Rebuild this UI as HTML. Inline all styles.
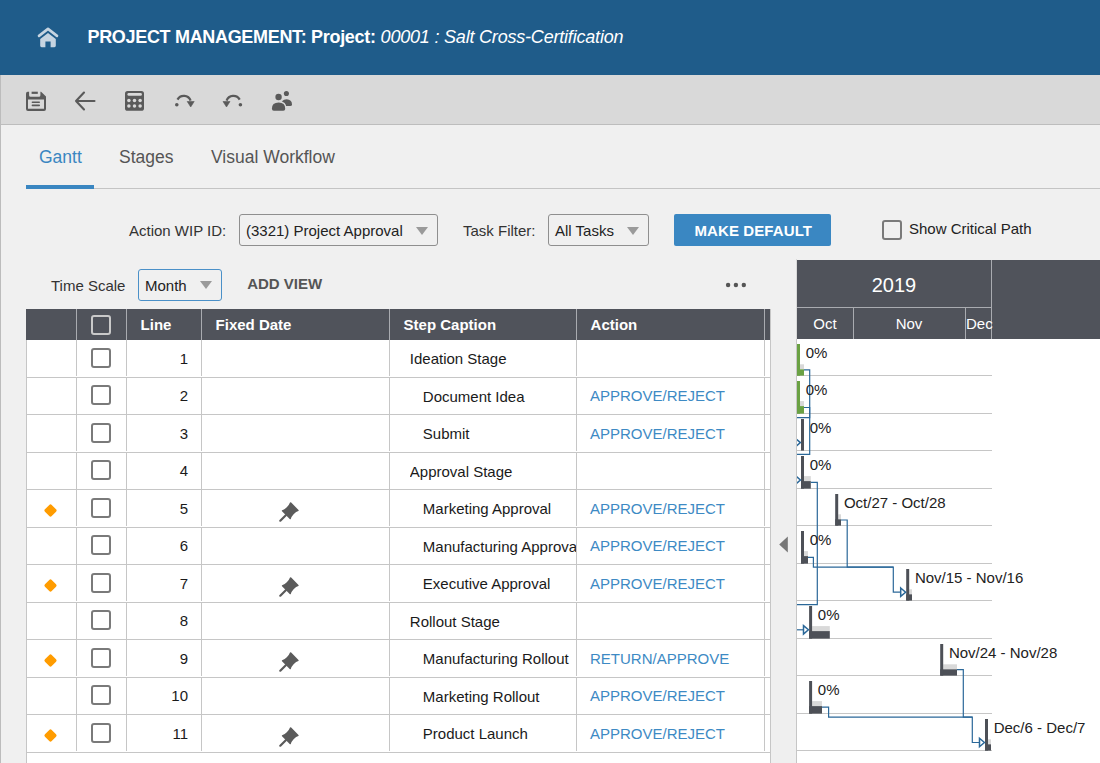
<!DOCTYPE html>
<html><head><meta charset="utf-8">
<style>
*{margin:0;padding:0;box-sizing:border-box}
html,body{width:1100px;height:763px;overflow:hidden}
body{font-family:"Liberation Sans",sans-serif;background:#f0f0f0;position:relative;color:#222}
.a{position:absolute;white-space:nowrap}
#hdr{left:0;top:0;width:1100px;height:75px;background:#1f5c8a}
#tb{left:0;top:75px;width:1100px;height:50px;background:#d9d9d9;border-bottom:1px solid #bdbdbd}
#lbar{left:0;top:75px;width:1px;height:688px;background:#bcbcbc}
.t15{font-size:15px;line-height:15px}
.sel{position:absolute;border:1px solid #8f8f8f;border-radius:3px;background:#f0f0f0}
.tri{position:absolute;width:0;height:0;border-left:6px solid transparent;border-right:6px solid transparent;border-top:8px solid #9a9a9a}
.cb{position:absolute;width:20px;height:20px;border:2px solid #7a7a7a;border-radius:3px;background:#fff}
</style></head><body>
<div id="hdr" class="a"></div>
<div id="tb" class="a"></div>
<div id="lbar" class="a"></div>

<!-- header -->
<svg class="a" style="left:37px;top:27px" width="22" height="21" viewBox="0 0 22 21">
 <path d="M2 8.9 L11 1.9 L20 8.9" fill="none" stroke="#c6d4e1" stroke-width="2.6" stroke-linecap="round" stroke-linejoin="round"/>
 <path d="M3.2 11.9 L11 5.9 L18.8 11.9 V18.8 Q18.8 20.2 17.4 20.2 H13.6 V14.4 H8.4 V20.2 H4.6 Q3.2 20.2 3.2 18.8 Z" fill="#c6d4e1"/>
</svg>
<div class="a" style="left:87.5px;top:27.5px;font-size:18px;line-height:18px;color:#fff"><b style="letter-spacing:-0.32px">PROJECT MANAGEMENT: Project:</b> <i style="letter-spacing:-0.2px">00001 : Salt Cross-Certification</i></div>

<!-- toolbar icons -->
<svg class="a" style="left:26px;top:91px" width="20" height="20" viewBox="0 0 20 20">
 <path fill="#5a5a5a" fill-rule="evenodd" d="M1.6 0.7 H15.1 L20 5.6 V17.9 Q20 19.9 18 19.9 H2 Q0 19.9 0 17.9 V2.7 Q0 0.7 1.6 0.7 Z M2 8.4 V17.8 H18 V8.4 Z M3.1 0.7 V4.3 Q3.1 5.8 4.6 5.8 H12.9 Q14.4 5.8 14.4 4.3 V0.7 Z"/>
 <rect x="5.6" y="0.7" width="6.2" height="2.2" fill="#5a5a5a"/>
 <rect x="5.6" y="10.6" width="8.4" height="1.5" rx="0.75" fill="#5a5a5a"/>
 <rect x="5.6" y="13.6" width="8.4" height="1.6" rx="0.8" fill="#5a5a5a"/>
</svg>
<svg class="a" style="left:74px;top:91px" width="22" height="20" viewBox="0 0 22 20">
 <path d="M10 1.5 L2 10 L10 18.5 M2 10 H20.5" fill="none" stroke="#5a5a5a" stroke-width="2.1" stroke-linecap="round" stroke-linejoin="round"/>
</svg>
<svg class="a" style="left:125px;top:91px" width="20" height="20" viewBox="0 0 20 20">
 <rect x="0" y="0" width="19" height="19.8" rx="2.6" fill="#5a5a5a"/>
 <rect x="2.4" y="2.1" width="14.5" height="2.7" rx="1.35" fill="#d9d9d9"/>
 <circle cx="3.9" cy="9.4" r="1.75" fill="#d9d9d9"/><circle cx="9.5" cy="9.4" r="1.75" fill="#d9d9d9"/><circle cx="15.1" cy="9.4" r="1.75" fill="#d9d9d9"/>
 <circle cx="3.9" cy="15.1" r="1.75" fill="#d9d9d9"/><circle cx="9.5" cy="15.1" r="1.75" fill="#d9d9d9"/><circle cx="15.1" cy="15.1" r="1.75" fill="#d9d9d9"/>
</svg>
<svg class="a" style="left:170px;top:88px" width="30" height="24" viewBox="170 88 30 24">
 <path d="M177.5 99.6 A7.2 7.2 0 0 1 190.6 100.6" fill="none" stroke="#5a5a5a" stroke-width="2.3"/>
 <circle cx="176.8" cy="104.8" r="1.8" fill="#5a5a5a"/>
 <path d="M187.2 101.5 H194.2 L190.7 107 Z" fill="#5a5a5a" stroke="#5a5a5a" stroke-width="0.6" stroke-linejoin="round"/>
</svg>
<svg class="a" style="left:218px;top:88px" width="30" height="24" viewBox="218 88 30 24">
 <path d="M239.7 99.6 A7.2 7.2 0 0 0 226.6 100.6" fill="none" stroke="#5a5a5a" stroke-width="2.3"/>
 <circle cx="240.4" cy="104.8" r="1.8" fill="#5a5a5a"/>
 <path d="M223 101.5 H230 L226.5 107 Z" fill="#5a5a5a" stroke="#5a5a5a" stroke-width="0.6" stroke-linejoin="round"/>
</svg>
<svg class="a" style="left:270px;top:88px" width="26" height="26" viewBox="270 88 26 26">
 <circle cx="286.4" cy="93.45" r="2.55" fill="#5a5a5a"/>
 <path d="M280.6 106 Q281 99.2 286.6 99.2 Q292 99.4 292 104.4 Q292 106 290.3 106 Z" fill="#5a5a5a"/>
 <path d="M271.9 108.8 Q271.9 102.4 278.6 102.4 Q285.2 102.4 285.2 108.8 Q285.2 110.7 283.3 110.7 H273.8 Q271.9 110.7 271.9 108.8 Z" fill="#d9d9d9" stroke="#d9d9d9" stroke-width="2.8"/>
 <path d="M271.9 108.8 Q271.9 102.4 278.6 102.4 Q285.2 102.4 285.2 108.8 Q285.2 110.7 283.3 110.7 H273.8 Q271.9 110.7 271.9 108.8 Z" fill="#5a5a5a"/>
 <circle cx="278.56" cy="97.03" r="3.2" fill="#5a5a5a"/>
</svg>

<!-- tabs -->
<div class="a" style="left:39px;top:149.3px;font-size:17.5px;line-height:17px;color:#3a86c1">Gantt</div>
<div class="a" style="left:119px;top:149.3px;font-size:17.5px;line-height:17px;color:#555">Stages</div>
<div class="a" style="left:211px;top:149.3px;font-size:17.5px;line-height:17px;color:#555">Visual Workflow</div>
<div class="a" style="left:26px;top:188px;width:1074px;height:1px;background:#c4c4c4"></div>
<div class="a" style="left:26px;top:185px;width:68px;height:4px;background:#3a86c1"></div>

<!-- filter row -->
<div class="a t15" style="left:129px;top:223px;color:#333">Action WIP ID:</div>
<div class="sel" style="left:239px;top:214px;width:199px;height:32px"></div>
<div class="a t15" style="left:246px;top:223px;color:#222">(3321) Project Approval</div>
<div class="tri" style="left:416px;top:227px"></div>
<div class="a t15" style="left:463px;top:223px;color:#333">Task Filter:</div>
<div class="sel" style="left:548px;top:214px;width:101px;height:32px"></div>
<div class="a t15" style="left:555px;top:223px;color:#222">All Tasks</div>
<div class="tri" style="left:627px;top:227px"></div>
<div class="a" style="left:674px;top:214px;width:157px;height:32px;background:#3a87c2;border-radius:2px"></div>
<div class="a" style="left:694.5px;top:222.8px;font-size:15px;line-height:15px;font-weight:bold;color:#fff;letter-spacing:0.1px">MAKE DEFAULT</div>
<div class="cb" style="left:882px;top:220px;background:#f0f0f0"></div>
<div class="a t15" style="left:909px;top:221px;color:#222">Show Critical Path</div>

<!-- time scale row -->
<div class="a t15" style="left:51px;top:278px;color:#333">Time Scale</div>
<div class="sel" style="left:138px;top:269px;width:84px;height:32px;border-color:#4a90c8"></div>
<div class="a t15" style="left:145px;top:278px;color:#222">Month</div>
<div class="tri" style="left:200px;top:281px"></div>
<div class="a" style="left:247.2px;top:276.2px;font-size:15px;line-height:15px;font-weight:bold;color:#555">ADD VIEW</div>
<svg class="a" style="left:720px;top:278px" width="30" height="14" viewBox="720 278 30 14">
 <circle cx="728.1" cy="285" r="2.2" fill="#555"/><circle cx="735.9" cy="285" r="2.2" fill="#555"/><circle cx="743.8" cy="285" r="2.2" fill="#555"/>
</svg>

<div class="a" style="left:26px;top:309px;width:745px;height:454px;background:#fff;border-left:1px solid #c6c6c6;border-right:1px solid #c6c6c6"></div>
<div class="a" style="left:26px;top:309px;width:744px;height:31px;background:#50535b"></div>
<div class="a" style="left:76px;top:309px;width:1px;height:31px;background:#a9abb0"></div>
<div class="a" style="left:126px;top:309px;width:1px;height:31px;background:#a9abb0"></div>
<div class="a" style="left:201px;top:309px;width:1px;height:31px;background:#a9abb0"></div>
<div class="a" style="left:389px;top:309px;width:1px;height:31px;background:#a9abb0"></div>
<div class="a" style="left:576px;top:309px;width:1px;height:31px;background:#a9abb0"></div>
<div class="a" style="left:764px;top:309px;width:1px;height:31px;background:#a9abb0"></div>
<div class="cb" style="left:91px;top:315px;width:20px;height:20px;background:#50535b;border-color:#c9c9c9"></div>
<div class="a" style="left:140.6px;top:316.90px;font-size:15px;line-height:15px;color:#fff;font-weight:bold;">Line</div>
<div class="a" style="left:215.6px;top:316.90px;font-size:15px;line-height:15px;color:#fff;font-weight:bold;">Fixed Date</div>
<div class="a" style="left:403.6px;top:316.90px;font-size:15px;line-height:15px;color:#fff;font-weight:bold;">Step Caption</div>
<div class="a" style="left:590.6px;top:316.90px;font-size:15px;line-height:15px;color:#fff;font-weight:bold;">Action</div>
<div class="a" style="left:27px;top:377px;width:743px;height:1px;background:#c6c6c6"></div>
<div class="a" style="left:76px;top:340.0px;width:1px;height:36.0px;background:#c6c6c6"></div>
<div class="a" style="left:126px;top:340.0px;width:1px;height:36.0px;background:#c6c6c6"></div>
<div class="a" style="left:201px;top:340.0px;width:1px;height:36.0px;background:#c6c6c6"></div>
<div class="a" style="left:389px;top:340.0px;width:1px;height:36.0px;background:#c6c6c6"></div>
<div class="a" style="left:576px;top:340.0px;width:1px;height:36.0px;background:#c6c6c6"></div>
<div class="a" style="left:764px;top:340.0px;width:1px;height:36.0px;background:#c6c6c6"></div>
<div class="cb" style="left:91px;top:347.5px"></div>
<div class="a" style="left:127px;width:61px;text-align:right;top:350.60px;font-size:15px;line-height:15px;color:#1a1a1a">1</div>
<div class="a" style="left:409.8px;top:349.10px;width:166.2px;overflow:hidden;font-size:15px;line-height:20px;color:#1a1a1a">Ideation Stage</div>
<div class="a" style="left:27px;top:414px;width:743px;height:1px;background:#c6c6c6"></div>
<div class="a" style="left:76px;top:377.5px;width:1px;height:36.0px;background:#c6c6c6"></div>
<div class="a" style="left:126px;top:377.5px;width:1px;height:36.0px;background:#c6c6c6"></div>
<div class="a" style="left:201px;top:377.5px;width:1px;height:36.0px;background:#c6c6c6"></div>
<div class="a" style="left:389px;top:377.5px;width:1px;height:36.0px;background:#c6c6c6"></div>
<div class="a" style="left:576px;top:377.5px;width:1px;height:36.0px;background:#c6c6c6"></div>
<div class="a" style="left:764px;top:377.5px;width:1px;height:36.0px;background:#c6c6c6"></div>
<div class="cb" style="left:91px;top:385.0px"></div>
<div class="a" style="left:127px;width:61px;text-align:right;top:388.10px;font-size:15px;line-height:15px;color:#1a1a1a">2</div>
<div class="a" style="left:422.8px;top:386.60px;width:153.2px;overflow:hidden;font-size:15px;line-height:20px;color:#1a1a1a">Document Idea</div>
<div class="a" style="left:590px;top:388.40px;font-size:15px;line-height:15px;color:#3d8ac4">APPROVE/REJECT</div>
<div class="a" style="left:27px;top:452px;width:743px;height:1px;background:#c6c6c6"></div>
<div class="a" style="left:76px;top:415.0px;width:1px;height:36.0px;background:#c6c6c6"></div>
<div class="a" style="left:126px;top:415.0px;width:1px;height:36.0px;background:#c6c6c6"></div>
<div class="a" style="left:201px;top:415.0px;width:1px;height:36.0px;background:#c6c6c6"></div>
<div class="a" style="left:389px;top:415.0px;width:1px;height:36.0px;background:#c6c6c6"></div>
<div class="a" style="left:576px;top:415.0px;width:1px;height:36.0px;background:#c6c6c6"></div>
<div class="a" style="left:764px;top:415.0px;width:1px;height:36.0px;background:#c6c6c6"></div>
<div class="cb" style="left:91px;top:422.5px"></div>
<div class="a" style="left:127px;width:61px;text-align:right;top:425.60px;font-size:15px;line-height:15px;color:#1a1a1a">3</div>
<div class="a" style="left:422.8px;top:424.10px;width:153.2px;overflow:hidden;font-size:15px;line-height:20px;color:#1a1a1a">Submit</div>
<div class="a" style="left:590px;top:425.90px;font-size:15px;line-height:15px;color:#3d8ac4">APPROVE/REJECT</div>
<div class="a" style="left:27px;top:489px;width:743px;height:1px;background:#c6c6c6"></div>
<div class="a" style="left:76px;top:452.5px;width:1px;height:36.0px;background:#c6c6c6"></div>
<div class="a" style="left:126px;top:452.5px;width:1px;height:36.0px;background:#c6c6c6"></div>
<div class="a" style="left:201px;top:452.5px;width:1px;height:36.0px;background:#c6c6c6"></div>
<div class="a" style="left:389px;top:452.5px;width:1px;height:36.0px;background:#c6c6c6"></div>
<div class="a" style="left:576px;top:452.5px;width:1px;height:36.0px;background:#c6c6c6"></div>
<div class="a" style="left:764px;top:452.5px;width:1px;height:36.0px;background:#c6c6c6"></div>
<div class="cb" style="left:91px;top:460.0px"></div>
<div class="a" style="left:127px;width:61px;text-align:right;top:463.10px;font-size:15px;line-height:15px;color:#1a1a1a">4</div>
<div class="a" style="left:409.8px;top:461.60px;width:166.2px;overflow:hidden;font-size:15px;line-height:20px;color:#1a1a1a">Approval Stage</div>
<div class="a" style="left:27px;top:527px;width:743px;height:1px;background:#c6c6c6"></div>
<div class="a" style="left:76px;top:490.0px;width:1px;height:36.0px;background:#c6c6c6"></div>
<div class="a" style="left:126px;top:490.0px;width:1px;height:36.0px;background:#c6c6c6"></div>
<div class="a" style="left:201px;top:490.0px;width:1px;height:36.0px;background:#c6c6c6"></div>
<div class="a" style="left:389px;top:490.0px;width:1px;height:36.0px;background:#c6c6c6"></div>
<div class="a" style="left:576px;top:490.0px;width:1px;height:36.0px;background:#c6c6c6"></div>
<div class="a" style="left:764px;top:490.0px;width:1px;height:36.0px;background:#c6c6c6"></div>
<div class="cb" style="left:91px;top:497.5px"></div>
<div class="a" style="left:127px;width:61px;text-align:right;top:500.60px;font-size:15px;line-height:15px;color:#1a1a1a">5</div>
<div class="a" style="left:422.8px;top:499.10px;width:153.2px;overflow:hidden;font-size:15px;line-height:20px;color:#1a1a1a">Marketing Approval</div>
<div class="a" style="left:590px;top:500.90px;font-size:15px;line-height:15px;color:#3d8ac4">APPROVE/REJECT</div>
<div class="a" style="left:45px;top:504.8px;width:11px;height:11px;background:#ff9c00;transform:rotate(45deg) scale(0.87);border-radius:2px"></div>
<svg class="a" style="left:279px;top:502.0px" width="20" height="20" viewBox="0 0 20 20"><path d="M11 0.6 Q11.6 0.1 12.2 0.6 L19.5 7.9 Q20 8.5 19.4 9.1 Q17.2 9.6 14.6 12.2 Q12.2 14.8 11.8 16.9 Q11.3 17.5 10.7 17 L3 9.3 Q2.5 8.7 3.1 8.2 Q5.3 7.7 7.8 5.2 Q10.4 2.6 11 0.6 Z" fill="#5b5b5b"/><path d="M6.8 13.2 L1.3 18.7" stroke="#5b5b5b" stroke-width="2.2" stroke-linecap="round"/></svg>
<div class="a" style="left:27px;top:564px;width:743px;height:1px;background:#c6c6c6"></div>
<div class="a" style="left:76px;top:527.5px;width:1px;height:36.0px;background:#c6c6c6"></div>
<div class="a" style="left:126px;top:527.5px;width:1px;height:36.0px;background:#c6c6c6"></div>
<div class="a" style="left:201px;top:527.5px;width:1px;height:36.0px;background:#c6c6c6"></div>
<div class="a" style="left:389px;top:527.5px;width:1px;height:36.0px;background:#c6c6c6"></div>
<div class="a" style="left:576px;top:527.5px;width:1px;height:36.0px;background:#c6c6c6"></div>
<div class="a" style="left:764px;top:527.5px;width:1px;height:36.0px;background:#c6c6c6"></div>
<div class="cb" style="left:91px;top:535.0px"></div>
<div class="a" style="left:127px;width:61px;text-align:right;top:538.10px;font-size:15px;line-height:15px;color:#1a1a1a">6</div>
<div class="a" style="left:422.8px;top:536.60px;width:153.2px;overflow:hidden;font-size:15px;line-height:20px;color:#1a1a1a">Manufacturing Approval</div>
<div class="a" style="left:590px;top:538.40px;font-size:15px;line-height:15px;color:#3d8ac4">APPROVE/REJECT</div>
<div class="a" style="left:27px;top:602px;width:743px;height:1px;background:#c6c6c6"></div>
<div class="a" style="left:76px;top:565.0px;width:1px;height:36.0px;background:#c6c6c6"></div>
<div class="a" style="left:126px;top:565.0px;width:1px;height:36.0px;background:#c6c6c6"></div>
<div class="a" style="left:201px;top:565.0px;width:1px;height:36.0px;background:#c6c6c6"></div>
<div class="a" style="left:389px;top:565.0px;width:1px;height:36.0px;background:#c6c6c6"></div>
<div class="a" style="left:576px;top:565.0px;width:1px;height:36.0px;background:#c6c6c6"></div>
<div class="a" style="left:764px;top:565.0px;width:1px;height:36.0px;background:#c6c6c6"></div>
<div class="cb" style="left:91px;top:572.5px"></div>
<div class="a" style="left:127px;width:61px;text-align:right;top:575.60px;font-size:15px;line-height:15px;color:#1a1a1a">7</div>
<div class="a" style="left:422.8px;top:574.10px;width:153.2px;overflow:hidden;font-size:15px;line-height:20px;color:#1a1a1a">Executive Approval</div>
<div class="a" style="left:590px;top:575.90px;font-size:15px;line-height:15px;color:#3d8ac4">APPROVE/REJECT</div>
<div class="a" style="left:45px;top:579.8px;width:11px;height:11px;background:#ff9c00;transform:rotate(45deg) scale(0.87);border-radius:2px"></div>
<svg class="a" style="left:279px;top:577.0px" width="20" height="20" viewBox="0 0 20 20"><path d="M11 0.6 Q11.6 0.1 12.2 0.6 L19.5 7.9 Q20 8.5 19.4 9.1 Q17.2 9.6 14.6 12.2 Q12.2 14.8 11.8 16.9 Q11.3 17.5 10.7 17 L3 9.3 Q2.5 8.7 3.1 8.2 Q5.3 7.7 7.8 5.2 Q10.4 2.6 11 0.6 Z" fill="#5b5b5b"/><path d="M6.8 13.2 L1.3 18.7" stroke="#5b5b5b" stroke-width="2.2" stroke-linecap="round"/></svg>
<div class="a" style="left:27px;top:639px;width:743px;height:1px;background:#c6c6c6"></div>
<div class="a" style="left:76px;top:602.5px;width:1px;height:36.0px;background:#c6c6c6"></div>
<div class="a" style="left:126px;top:602.5px;width:1px;height:36.0px;background:#c6c6c6"></div>
<div class="a" style="left:201px;top:602.5px;width:1px;height:36.0px;background:#c6c6c6"></div>
<div class="a" style="left:389px;top:602.5px;width:1px;height:36.0px;background:#c6c6c6"></div>
<div class="a" style="left:576px;top:602.5px;width:1px;height:36.0px;background:#c6c6c6"></div>
<div class="a" style="left:764px;top:602.5px;width:1px;height:36.0px;background:#c6c6c6"></div>
<div class="cb" style="left:91px;top:610.0px"></div>
<div class="a" style="left:127px;width:61px;text-align:right;top:613.10px;font-size:15px;line-height:15px;color:#1a1a1a">8</div>
<div class="a" style="left:409.8px;top:611.60px;width:166.2px;overflow:hidden;font-size:15px;line-height:20px;color:#1a1a1a">Rollout Stage</div>
<div class="a" style="left:27px;top:677px;width:743px;height:1px;background:#c6c6c6"></div>
<div class="a" style="left:76px;top:640.0px;width:1px;height:36.0px;background:#c6c6c6"></div>
<div class="a" style="left:126px;top:640.0px;width:1px;height:36.0px;background:#c6c6c6"></div>
<div class="a" style="left:201px;top:640.0px;width:1px;height:36.0px;background:#c6c6c6"></div>
<div class="a" style="left:389px;top:640.0px;width:1px;height:36.0px;background:#c6c6c6"></div>
<div class="a" style="left:576px;top:640.0px;width:1px;height:36.0px;background:#c6c6c6"></div>
<div class="a" style="left:764px;top:640.0px;width:1px;height:36.0px;background:#c6c6c6"></div>
<div class="cb" style="left:91px;top:647.5px"></div>
<div class="a" style="left:127px;width:61px;text-align:right;top:650.60px;font-size:15px;line-height:15px;color:#1a1a1a">9</div>
<div class="a" style="left:422.8px;top:649.10px;width:153.2px;overflow:hidden;font-size:15px;line-height:20px;color:#1a1a1a">Manufacturing Rollout</div>
<div class="a" style="left:590px;top:650.90px;font-size:15px;line-height:15px;color:#3d8ac4">RETURN/APPROVE</div>
<div class="a" style="left:45px;top:654.8px;width:11px;height:11px;background:#ff9c00;transform:rotate(45deg) scale(0.87);border-radius:2px"></div>
<svg class="a" style="left:279px;top:652.0px" width="20" height="20" viewBox="0 0 20 20"><path d="M11 0.6 Q11.6 0.1 12.2 0.6 L19.5 7.9 Q20 8.5 19.4 9.1 Q17.2 9.6 14.6 12.2 Q12.2 14.8 11.8 16.9 Q11.3 17.5 10.7 17 L3 9.3 Q2.5 8.7 3.1 8.2 Q5.3 7.7 7.8 5.2 Q10.4 2.6 11 0.6 Z" fill="#5b5b5b"/><path d="M6.8 13.2 L1.3 18.7" stroke="#5b5b5b" stroke-width="2.2" stroke-linecap="round"/></svg>
<div class="a" style="left:27px;top:714px;width:743px;height:1px;background:#c6c6c6"></div>
<div class="a" style="left:76px;top:677.5px;width:1px;height:36.0px;background:#c6c6c6"></div>
<div class="a" style="left:126px;top:677.5px;width:1px;height:36.0px;background:#c6c6c6"></div>
<div class="a" style="left:201px;top:677.5px;width:1px;height:36.0px;background:#c6c6c6"></div>
<div class="a" style="left:389px;top:677.5px;width:1px;height:36.0px;background:#c6c6c6"></div>
<div class="a" style="left:576px;top:677.5px;width:1px;height:36.0px;background:#c6c6c6"></div>
<div class="a" style="left:764px;top:677.5px;width:1px;height:36.0px;background:#c6c6c6"></div>
<div class="cb" style="left:91px;top:685.0px"></div>
<div class="a" style="left:127px;width:61px;text-align:right;top:688.10px;font-size:15px;line-height:15px;color:#1a1a1a">10</div>
<div class="a" style="left:422.8px;top:686.60px;width:153.2px;overflow:hidden;font-size:15px;line-height:20px;color:#1a1a1a">Marketing Rollout</div>
<div class="a" style="left:590px;top:688.40px;font-size:15px;line-height:15px;color:#3d8ac4">APPROVE/REJECT</div>
<div class="a" style="left:27px;top:752px;width:743px;height:1px;background:#c6c6c6"></div>
<div class="a" style="left:76px;top:715.0px;width:1px;height:36.0px;background:#c6c6c6"></div>
<div class="a" style="left:126px;top:715.0px;width:1px;height:36.0px;background:#c6c6c6"></div>
<div class="a" style="left:201px;top:715.0px;width:1px;height:36.0px;background:#c6c6c6"></div>
<div class="a" style="left:389px;top:715.0px;width:1px;height:36.0px;background:#c6c6c6"></div>
<div class="a" style="left:576px;top:715.0px;width:1px;height:36.0px;background:#c6c6c6"></div>
<div class="a" style="left:764px;top:715.0px;width:1px;height:36.0px;background:#c6c6c6"></div>
<div class="cb" style="left:91px;top:722.5px"></div>
<div class="a" style="left:127px;width:61px;text-align:right;top:725.60px;font-size:15px;line-height:15px;color:#1a1a1a">11</div>
<div class="a" style="left:422.8px;top:724.10px;width:153.2px;overflow:hidden;font-size:15px;line-height:20px;color:#1a1a1a">Product Launch</div>
<div class="a" style="left:590px;top:725.90px;font-size:15px;line-height:15px;color:#3d8ac4">APPROVE/REJECT</div>
<div class="a" style="left:45px;top:729.8px;width:11px;height:11px;background:#ff9c00;transform:rotate(45deg) scale(0.87);border-radius:2px"></div>
<svg class="a" style="left:279px;top:727.0px" width="20" height="20" viewBox="0 0 20 20"><path d="M11 0.6 Q11.6 0.1 12.2 0.6 L19.5 7.9 Q20 8.5 19.4 9.1 Q17.2 9.6 14.6 12.2 Q12.2 14.8 11.8 16.9 Q11.3 17.5 10.7 17 L3 9.3 Q2.5 8.7 3.1 8.2 Q5.3 7.7 7.8 5.2 Q10.4 2.6 11 0.6 Z" fill="#5b5b5b"/><path d="M6.8 13.2 L1.3 18.7" stroke="#5b5b5b" stroke-width="2.2" stroke-linecap="round"/></svg>
<div class="a" style="left:771px;top:340px;width:25px;height:423px;background:#efefef"></div>
<div class="a" style="left:796px;top:339px;width:1px;height:424px;background:#c6c6c6"></div>
<div class="a" style="left:796px;top:259px;width:1px;height:80px;background:#d9d9d9"></div>
<svg class="a" style="left:776px;top:532px" width="16" height="24" viewBox="776 532 16 24"><path d="M779.2 544.4 L787.8 536.4 V552.4 Z" fill="#777"/></svg>
<div class="a" style="left:797px;top:260px;width:303px;height:79px;background:#50535b"></div>
<div class="a" style="left:797px;top:339px;width:303px;height:424px;background:#fff"></div>
<div class="a" style="left:797px;top:307px;width:194px;height:1px;background:#a9abb0"></div>
<div class="a" style="left:991px;top:260px;width:1px;height:79px;background:#a9abb0"></div>
<div class="a" style="left:853px;top:308px;width:1px;height:31px;background:#a9abb0"></div>
<div class="a" style="left:965px;top:308px;width:1px;height:31px;background:#a9abb0"></div>
<div class="a" style="left:797px;top:274.67px;font-size:20px;line-height:20px;color:#fff;width:194px;text-align:center;">2019</div>
<div class="a" style="left:797px;top:316.00px;font-size:15px;line-height:15px;color:#fff;width:56px;text-align:center;">Oct</div>
<div class="a" style="left:853px;top:316.00px;font-size:15px;line-height:15px;color:#fff;width:112px;text-align:center;">Nov</div>
<div class="a" style="left:966px;top:316.00px;font-size:15px;line-height:15px;color:#fff;">Dec</div>
<svg class="a" style="left:797px;top:339px;overflow:hidden" width="303" height="424" viewBox="797 339 303 424"><line x1="797" y1="375.5" x2="992" y2="375.5" stroke="#c6c6c6" stroke-width="1"/><line x1="797" y1="413.5" x2="992" y2="413.5" stroke="#c6c6c6" stroke-width="1"/><line x1="797" y1="450.5" x2="992" y2="450.5" stroke="#c6c6c6" stroke-width="1"/><line x1="797" y1="488.5" x2="992" y2="488.5" stroke="#c6c6c6" stroke-width="1"/><line x1="797" y1="525.5" x2="992" y2="525.5" stroke="#c6c6c6" stroke-width="1"/><line x1="797" y1="563.5" x2="992" y2="563.5" stroke="#c6c6c6" stroke-width="1"/><line x1="797" y1="600.5" x2="992" y2="600.5" stroke="#c6c6c6" stroke-width="1"/><line x1="797" y1="638.5" x2="992" y2="638.5" stroke="#c6c6c6" stroke-width="1"/><line x1="797" y1="675.5" x2="992" y2="675.5" stroke="#c6c6c6" stroke-width="1"/><line x1="797" y1="713.5" x2="992" y2="713.5" stroke="#c6c6c6" stroke-width="1"/><line x1="797" y1="750.5" x2="992" y2="750.5" stroke="#c6c6c6" stroke-width="1"/><rect x="800" y="364.3" width="4.0" height="5" fill="#d9d9d9"/><rect x="797" y="369.3" width="7.0" height="6.3" fill="#6aa143"/><rect x="797" y="344.0" width="3" height="31.6" fill="#6aa143"/><rect x="800" y="401.1" width="4.0" height="5" fill="#d9d9d9"/><rect x="797" y="406.1" width="7.0" height="7.5" fill="#6aa143"/><rect x="797" y="381.0" width="3" height="32.6" fill="#6aa143"/><rect x="801" y="419.0" width="3" height="31.6" fill="#4d5057"/><rect x="804" y="476.1" width="6.8" height="5" fill="#d9d9d9"/><rect x="801" y="481.1" width="9.8" height="7.5" fill="#4d5057"/><rect x="801" y="456.0" width="3" height="32.6" fill="#4d5057"/><rect x="838.2" y="514.3" width="2.8" height="5" fill="#d9d9d9"/><rect x="835.2" y="519.3" width="5.8" height="6.3" fill="#4d5057"/><rect x="835.2" y="494.0" width="3" height="31.6" fill="#4d5057"/><rect x="804" y="551.1" width="4.0" height="5" fill="#d9d9d9"/><rect x="801" y="556.1" width="7.0" height="7.5" fill="#4d5057"/><rect x="801" y="531.0" width="3" height="32.6" fill="#4d5057"/><rect x="909.2" y="589.3" width="2.8" height="5" fill="#d9d9d9"/><rect x="906.2" y="594.3" width="5.8" height="6.3" fill="#4d5057"/><rect x="906.2" y="569.0" width="3" height="31.6" fill="#4d5057"/><rect x="812.1" y="626.1" width="17.7" height="5" fill="#d9d9d9"/><rect x="809.1" y="631.1" width="20.7" height="7.5" fill="#4d5057"/><rect x="809.1" y="606.0" width="3" height="32.6" fill="#4d5057"/><rect x="943.2" y="664.3" width="13.8" height="5" fill="#d9d9d9"/><rect x="940.2" y="669.3" width="16.8" height="6.3" fill="#4d5057"/><rect x="940.2" y="644.0" width="3" height="31.6" fill="#4d5057"/><rect x="812.1" y="701.1" width="9.9" height="5" fill="#d9d9d9"/><rect x="809.1" y="706.1" width="12.9" height="7.5" fill="#4d5057"/><rect x="809.1" y="681.0" width="3" height="32.6" fill="#4d5057"/><rect x="988" y="739.3" width="3.0" height="5" fill="#d9d9d9"/><rect x="985" y="744.3" width="6.0" height="6.3" fill="#4d5057"/><rect x="985" y="719.0" width="3" height="31.6" fill="#4d5057"/><path d="M804 369.9 H809.7 V417.7 H790" fill="none" stroke="#2b6899" stroke-width="1.2"/><path d="M804 407.5 H809.7 V454.4 H790" fill="none" stroke="#2b6899" stroke-width="1.2"/><path d="M810.8 482.3 H817.3 V604.6 H790" fill="none" stroke="#2b6899" stroke-width="1.2"/><path d="M841 520 H847.2 V567.2 H893.3 V592.2 H905" fill="none" stroke="#2b6899" stroke-width="1.2"/><path d="M808 557.4 H813.4 V567.2 H893.3" fill="none" stroke="#2b6899" stroke-width="1.2"/><path d="M957 669.6 H963.3 V717.2 H972.3 V742.5 H984" fill="none" stroke="#2b6899" stroke-width="1.2"/><path d="M822 707.2 H828.6 V717.2 H972.3" fill="none" stroke="#2b6899" stroke-width="1.2"/><path d="M790 442.6 H800" fill="none" stroke="#2b6899" stroke-width="1.2"/><path d="M790 480 H800" fill="none" stroke="#2b6899" stroke-width="1.2"/><path d="M790 629.8 H808" fill="none" stroke="#2b6899" stroke-width="1.2"/><path d="M795.5 438.40000000000003 L800.4 442.6 L795.5 446.8 Z" fill="#fff" stroke="#2b6899" stroke-width="1.5" stroke-linejoin="miter"/><path d="M795.5 475.8 L800.4 480 L795.5 484.2 Z" fill="#fff" stroke="#2b6899" stroke-width="1.5" stroke-linejoin="miter"/><path d="M803.5 625.5999999999999 L808.4 629.8 L803.5 634.0 Z" fill="#fff" stroke="#2b6899" stroke-width="1.5" stroke-linejoin="miter"/><path d="M900.7 588.0 L905.6 592.2 L900.7 596.4000000000001 Z" fill="#fff" stroke="#2b6899" stroke-width="1.5" stroke-linejoin="miter"/><path d="M979.5 738.3 L984.4 742.5 L979.5 746.7 Z" fill="#fff" stroke="#2b6899" stroke-width="1.5" stroke-linejoin="miter"/></svg>
<div class="a" style="left:805.7px;top:345.00px;font-size:15px;line-height:15px;color:#222;">0%</div>
<div class="a" style="left:805.7px;top:382.00px;font-size:15px;line-height:15px;color:#222;">0%</div>
<div class="a" style="left:809.7px;top:420.00px;font-size:15px;line-height:15px;color:#222;">0%</div>
<div class="a" style="left:809.7px;top:457.00px;font-size:15px;line-height:15px;color:#222;">0%</div>
<div class="a" style="left:843.9000000000001px;top:495.00px;font-size:15px;line-height:15px;color:#222;">Oct/27 - Oct/28</div>
<div class="a" style="left:809.7px;top:532.00px;font-size:15px;line-height:15px;color:#222;">0%</div>
<div class="a" style="left:914.9000000000001px;top:570.00px;font-size:15px;line-height:15px;color:#222;">Nov/15 - Nov/16</div>
<div class="a" style="left:817.8000000000001px;top:607.00px;font-size:15px;line-height:15px;color:#222;">0%</div>
<div class="a" style="left:948.9000000000001px;top:645.00px;font-size:15px;line-height:15px;color:#222;">Nov/24 - Nov/28</div>
<div class="a" style="left:817.8000000000001px;top:682.00px;font-size:15px;line-height:15px;color:#222;">0%</div>
<div class="a" style="left:993.7px;top:720.00px;font-size:15px;line-height:15px;color:#222;">Dec/6 - Dec/7</div>
</body></html>
